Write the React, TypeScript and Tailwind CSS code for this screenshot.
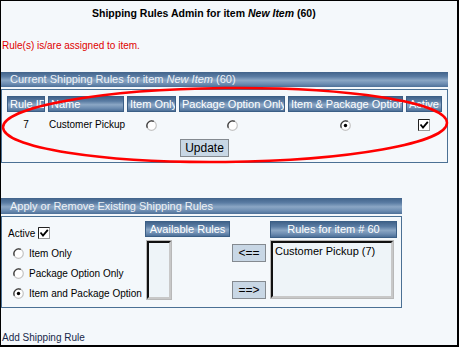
import React from 'react'

const BAR = 'bg-[linear-gradient(to_bottom,#41638a_0%,#5a7ca3_30%,#8ba7c5_55%,#6c8cb1_80%,#4d7098_100%)]'
const CELL = `h-[16px] border border-[#3b5f86] ${BAR} px-[2px] text-[11px] leading-[14px] text-white whitespace-nowrap overflow-hidden`
const BTN = 'border border-[#848a90] bg-[#c8d7e5] text-[12px] leading-[16px] text-black'

function Radio({ checked = false }: { checked?: boolean }) {
  return (
    <svg width="11" height="11" viewBox="0 0 11 11" className="shrink-0">
      <circle cx="5.5" cy="5.5" r="4.8" fill="#fff" stroke="#c4c4c4" strokeWidth="1.2" />
      <path d="M1.4 7.8 A4.8 4.8 0 0 1 7.8 1.4" stroke="#3a3a3a" strokeWidth="1.3" fill="none" />
      {checked && <circle cx="5.5" cy="5.5" r="1.7" fill="#000" />}
    </svg>
  )
}

function Check() {
  return (
    <svg width="12" height="12" viewBox="0 0 12 12" className="shrink-0">
      <rect x="0.5" y="0.5" width="11" height="11" fill="#fff" stroke="#9a9a9a" />
      <path d="M0.5 11.5 V0.5 H11.5" stroke="#222" fill="none" />
      <path d="M2.5 5.5 L5 8.5 L9.8 2.8" stroke="#000" strokeWidth="1.8" fill="none" />
    </svg>
  )
}

export default function App() {
  return (
    <div className='relative box-border h-[347px] w-[459px] overflow-hidden border-t border-l border-r-2 border-b-2 border-black bg-[#f4f8fb] text-[10px] [font-family:"Liberation_Sans",Arial,sans-serif]'>
      {/* Title */}
      <div className="mt-[5px] h-[15px] whitespace-nowrap pl-[91px] text-[10.5px] font-bold leading-[15px] text-black">
        Shipping Rules Admin for item <i>New Item</i> (60)
      </div>

      <div className="mt-[18px] h-[14px] pl-[1px] text-[10px] leading-[14px] text-[#e00000]">
        Rule(s) is/are assigned to item.
      </div>

      {/* Current rules */}
      <div className={`mt-[19px] h-[15px] w-[447px] ${BAR} pl-[9px] text-[11px] leading-[15px] text-[#eef2f6]`}>
        Current Shipping Rules for item <i>New Item</i> (60)
      </div>
      <div className="mt-[2px] box-border h-[74px] w-[447px] border border-[#4a7094] pl-[5px] pt-[6px]">
        <div className="grid grid-cols-[38px_76px_49px_106px_115px_36px] gap-x-[3px]">
          <div className={CELL}>Rule ID</div>
          <div className={CELL}>Name</div>
          <div className={CELL}>Item Only</div>
          <div className={CELL}>Package Option Only</div>
          <div className={CELL}>Item &amp; Package Option</div>
          <div className={CELL}>Active</div>

          <div className="mt-[6px] h-[14px] text-center text-[10px] leading-[14px]">7</div>
          <div className="mt-[6px] h-[14px] whitespace-nowrap pl-[1px] text-[10px] leading-[14px]">Customer Pickup</div>
          <div className="mt-[6px] flex h-[14px] items-center justify-center"><Radio /></div>
          <div className="mt-[6px] flex h-[14px] items-center justify-center"><Radio /></div>
          <div className="mt-[6px] flex h-[14px] items-center justify-center"><Radio checked /></div>
          <div className="mt-[6px] flex h-[14px] items-center justify-center"><Check /></div>
        </div>
        <div className="ml-[173px] mt-[7px]">
          <button className={`h-[18px] w-[49px] ${BTN}`}>Update</button>
        </div>
      </div>

      {/* Apply / remove */}
      <div className={`mt-[35px] h-[16px] w-[401px] ${BAR} pl-[9px] text-[11px] leading-[16px] text-[#eef2f6]`}>
        Apply or Remove Existing Shipping Rules
      </div>
      <div className="mt-[2px] box-border flex h-[92px] w-[401px] items-start border border-[#4a7094]">
        <div className="w-[143px] pt-[9px]">
          <div className="flex h-[14px] items-center gap-[3px] pl-[6px] text-[10px]">
            Active <Check />
          </div>
          {['Item Only', 'Package Option Only', 'Item and Package Option'].map((l, i) => (
            <div key={l} className="mt-[6px] flex h-[14px] items-center gap-[5px] pl-[11px] text-[10px]">
              <Radio checked={i === 2} />
              <span className="whitespace-nowrap">{l}</span>
            </div>
          ))}
        </div>

        <div className="w-[85px] pt-[4px]">
          <div className={`${CELL} h-[16px] text-center`}>Available Rules</div>
          <div className="ml-[2px] mt-[4px] h-[58px] w-[24px] border-2 border-t-[#111] border-l-[#111] border-r-[#c8c8c8] border-b-[#c8c8c8] bg-[#eef4f8] outline outline-1 outline-[#b8b8b8]" />
        </div>

        <div className="ml-[2px] flex w-[34px] flex-col pt-[27px]">
          <button className={`h-[18px] w-[34px] ${BTN}`}>&lt;==</button>
          <button className={`mt-[19px] h-[18px] w-[34px] ${BTN}`}>==&gt;</button>
        </div>

        <div className="ml-[4px] w-[127px] pt-[4px]">
          <div className={`${CELL} h-[17px] text-center leading-[15px]`}>Rules for item # 60</div>
          <div className="ml-[1px] mt-[3px] box-border h-[57px] w-[122px] border-2 border-t-[#111] border-l-[#111] border-r-[#c8c8c8] border-b-[#c8c8c8] bg-[#eef4f8] pl-[2px] text-[11px] leading-[16px] text-black outline outline-1 outline-[#b8b8b8]">
            Customer Pickup (7)
          </div>
        </div>
      </div>

      <div className="mt-[23px] h-[14px] pl-[1px] text-[10px] leading-[14px] text-[#17284a]">
        Add Shipping Rule
      </div>

      {/* red annotation ellipse */}
      <svg className="pointer-events-none absolute left-[-1px] top-[-1px]" width="459" height="347">
        <ellipse cx="225" cy="125" rx="222" ry="37" stroke="#ff0000" strokeWidth="2.5" fill="none" transform="rotate(-0.6 225 125)" />
      </svg>
    </div>
  )
}
